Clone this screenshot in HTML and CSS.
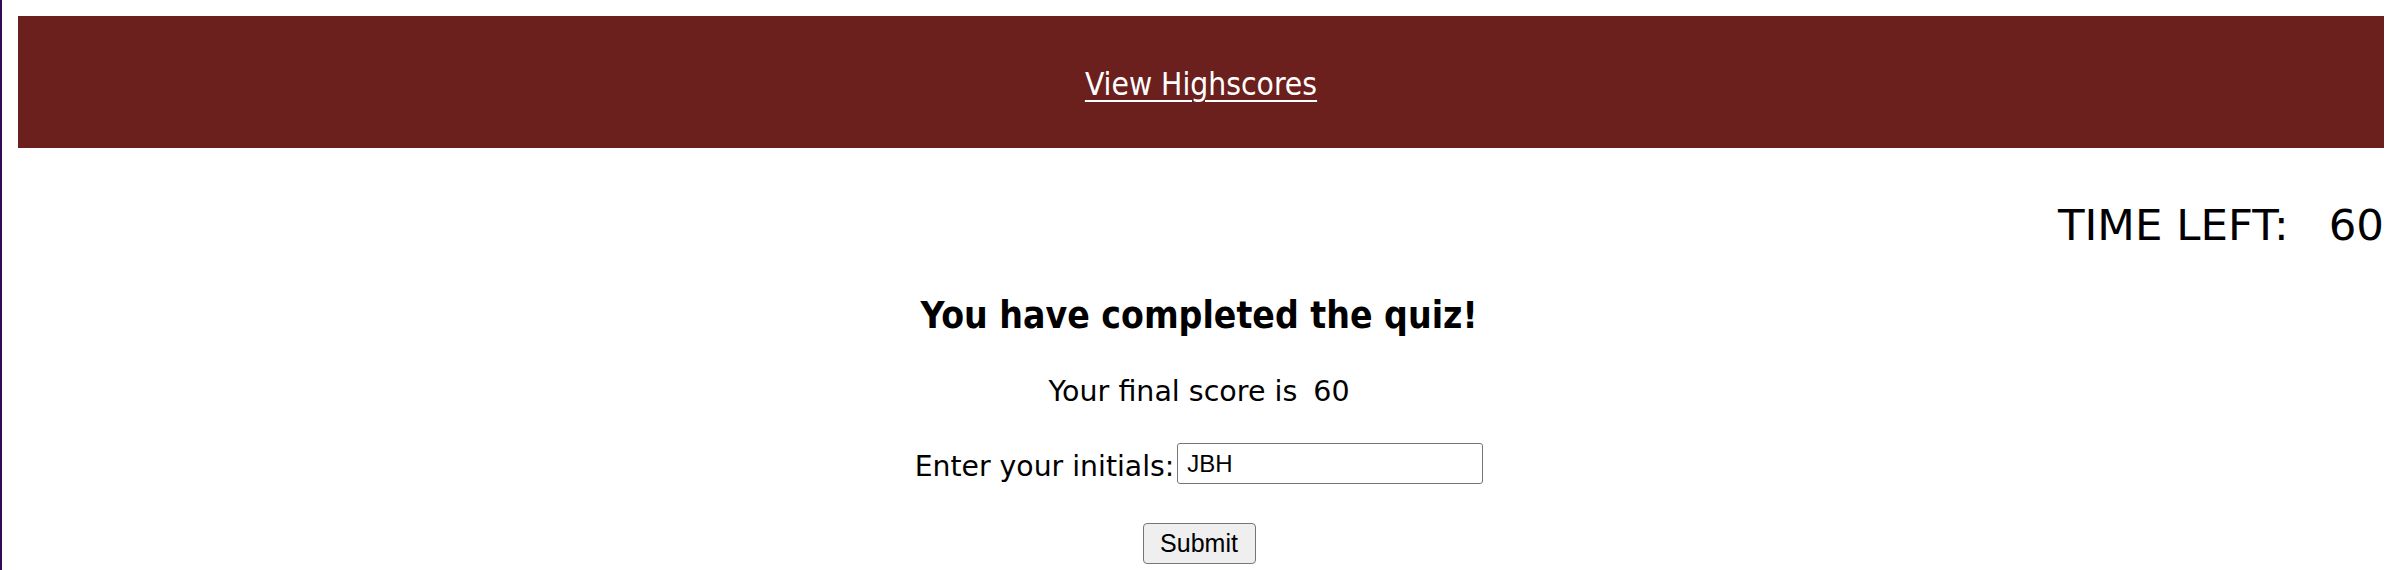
FILE: index.html
```html
<!DOCTYPE html>
<html lang="en">
<head>
<meta charset="utf-8">
<title>Quiz</title>
<link rel="stylesheet" href="styles.css">
</head>
<body>
<header class="banner">
  <a class="banner-link" href="#">View Highscores</a>
</header>
<div class="timer">TIME LEFT:<span class="timer-value">60</span></div>
<main class="done">
  <h2 class="done-title">You have completed the quiz!</h2>
  <p class="done-score">Your final score is<span class="score-value">60</span></p>
  <form class="initials-row">
    <label class="initials-label" for="initials">Enter your initials:</label>
    <input class="initials-input" id="initials" type="text" value="JBH">
  </form>
  <div class="submit-row">
    <button class="submit-btn" type="button">Submit</button>
  </div>
</main>
</body>
</html>
```

FILE: styles.css
```css
html, body {
  margin: 0;
  padding: 0;
  background: #ffffff;
}

body {
  border-left: 2px solid #350a52;
  min-height: 570px;
  box-sizing: border-box;
  font-family: "DejaVu Sans", Verdana, sans-serif;
  color: #000;
}

.banner {
  margin: 16px 12px 0 16px;
  height: 132px;
  background: #6b201e;
  display: flex;
  align-items: center;
  justify-content: center;
}

.banner-link {
  padding-top: 4px;
  color: #ffffff;
  font-family: "DejaVu Sans Condensed", "DejaVu Sans", sans-serif;
  font-stretch: condensed;
  font-size: 31.5px;
  line-height: 40px;
  text-decoration: underline;
  text-decoration-thickness: 2px;
  text-underline-offset: 5px;
}

.timer {
  margin-top: 47px;
  padding-right: 12px;
  text-align: right;
  font-size: 43.5px;
  line-height: 60px;
}

.timer-value {
  margin-left: 40px;
}

.done {
  display: flex;
  flex-direction: column;
  align-items: center;
}

.done-title {
  margin: 36px 0 0 0;
  font-family: "DejaVu Sans Condensed", "DejaVu Sans", sans-serif;
  font-stretch: condensed;
  font-size: 37px;
  line-height: 50px;
  font-weight: bold;
}

.done-score {
  margin: 31px 0 0 0;
  font-size: 28.5px;
  line-height: 40px;
}

.score-value {
  margin-left: 16px;
}

.initials-row {
  margin: 31px 0 0 0;
  display: flex;
  align-items: flex-start;
}

.initials-label {
  font-size: 28.3px;
  line-height: 41px;
  padding-top: 3px;
  margin-right: 3px;
}

.initials-input {
  width: 306px;
  height: 41px;
  box-sizing: border-box;
  border: 1.5px solid #767676;
  border-radius: 3px;
  padding: 0 9px;
  font-family: "Liberation Sans", Arial, sans-serif;
  font-size: 24px;
  color: #000;
  background: #fff;
}

.submit-row {
  margin-top: 36px;
}

.submit-btn {
  width: 113px;
  height: 41px;
  box-sizing: border-box;
  border: 1.5px solid #767676;
  border-radius: 4px;
  background: #efefef;
  font-family: "Liberation Sans", Arial, sans-serif;
  font-size: 25px;
  color: #000;
  padding: 0;
}
```
